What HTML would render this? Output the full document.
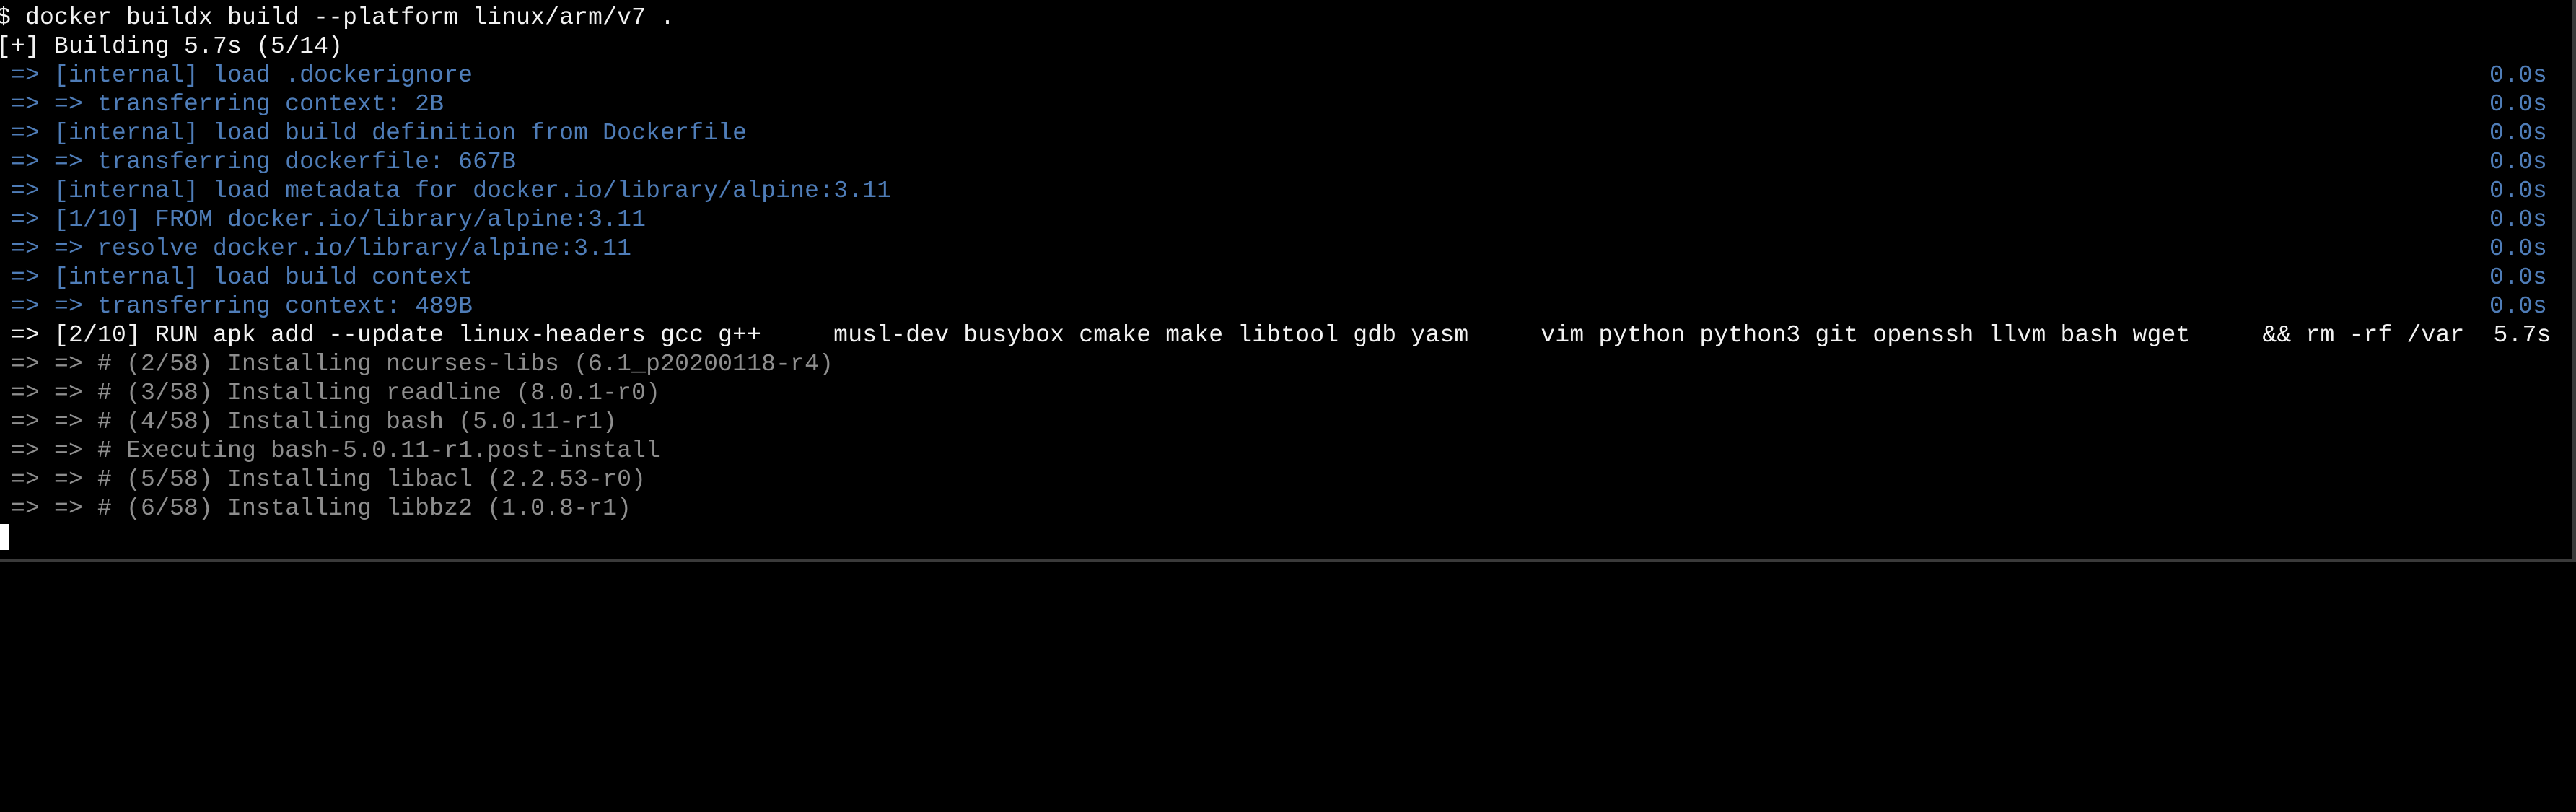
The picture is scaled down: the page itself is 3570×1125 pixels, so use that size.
<!DOCTYPE html>
<html><head><meta charset="utf-8"><style>
html,body{margin:0;padding:0;background:#000;width:3570px;height:778px;overflow:hidden}
.t{position:absolute;left:-5px;top:5px;font-family:"Liberation Mono","DejaVu Sans Mono",monospace;font-size:33px;letter-spacing:0.2px;line-height:40px;white-space:pre;color:#fff}
.r{position:absolute;left:0;height:40px}
.w{color:#f2f2f2}.b{color:#4f7db8}.g{color:#8e8e8e}
.tm{position:absolute;left:3455px}
.cur{position:absolute;left:0;top:726px;width:13px;height:36px;background:#fff}
.bb{position:absolute;left:0;top:775px;width:3566px;height:3px;background:#3a3a3a}
.br{position:absolute;left:3565px;top:0;width:5px;height:778px;background:#3a3a3a}
</style></head><body>
<div class="t">
<div class="r w" style="top:0">$ docker buildx build --platform linux/arm/v7 .</div>
<div class="r w" style="top:40px">[+] Building 5.7s (5/14)</div>
<div class="r b" style="top:80px"> => [internal] load .dockerignore</div>
<div class="r b" style="top:120px"> => => transferring context: 2B</div>
<div class="r b" style="top:160px"> => [internal] load build definition from Dockerfile</div>
<div class="r b" style="top:200px"> => => transferring dockerfile: 667B</div>
<div class="r b" style="top:240px"> => [internal] load metadata for docker.io/library/alpine:3.11</div>
<div class="r b" style="top:280px"> => [1/10] FROM docker.io/library/alpine:3.11</div>
<div class="r b" style="top:320px"> => => resolve docker.io/library/alpine:3.11</div>
<div class="r b" style="top:360px"> => [internal] load build context</div>
<div class="r b" style="top:400px"> => => transferring context: 489B</div>
<div class="r w" style="top:440px"> => [2/10] RUN apk add --update linux-headers gcc g++     musl-dev busybox cmake make libtool gdb yasm     vim python python3 git openssh llvm bash wget     &amp;&amp; rm -rf /var  5.7s</div>
<div class="r g" style="top:480px"> => => # (2/58) Installing ncurses-libs (6.1_p20200118-r4)</div>
<div class="r g" style="top:520px"> => => # (3/58) Installing readline (8.0.1-r0)</div>
<div class="r g" style="top:560px"> => => # (4/58) Installing bash (5.0.11-r1)</div>
<div class="r g" style="top:600px"> => => # Executing bash-5.0.11-r1.post-install</div>
<div class="r g" style="top:640px"> => => # (5/58) Installing libacl (2.2.53-r0)</div>
<div class="r g" style="top:680px"> => => # (6/58) Installing libbz2 (1.0.8-r1)</div>
<div class="tm b" style="top:80px">0.0s</div>
<div class="tm b" style="top:120px">0.0s</div>
<div class="tm b" style="top:160px">0.0s</div>
<div class="tm b" style="top:200px">0.0s</div>
<div class="tm b" style="top:240px">0.0s</div>
<div class="tm b" style="top:280px">0.0s</div>
<div class="tm b" style="top:320px">0.0s</div>
<div class="tm b" style="top:360px">0.0s</div>
<div class="tm b" style="top:400px">0.0s</div>
</div>
<div class="cur"></div>
<div class="bb"></div><div class="br"></div>
</body></html>
